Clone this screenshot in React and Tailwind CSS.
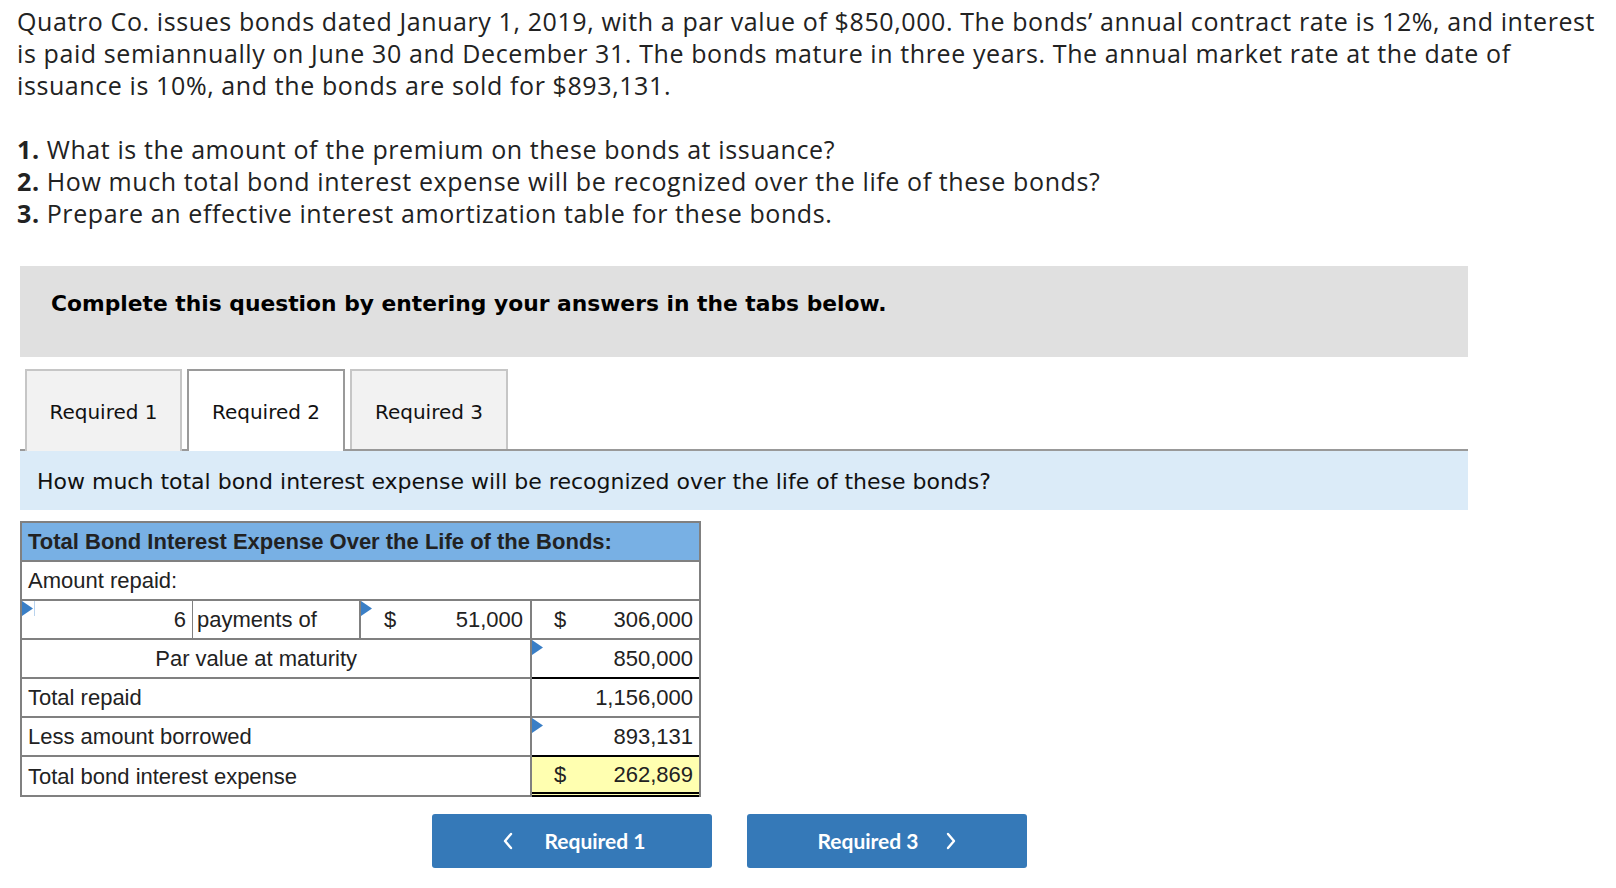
import React from "react";

const Tri = () => (
  <svg className="absolute left-0 top-0" width="11" height="15" viewBox="0 0 11 15">
    <polygon points="0,0 11,7.5 0,15" fill="#3a7fc6" />
  </svg>
);

export default function App() {
  const arial = { fontFamily: '"Liberation Sans", Arial, sans-serif' };
  return (
    <div className="w-[1616px] h-[888px] bg-white overflow-hidden text-[#1a1a1a]">
      <div
        className="pl-[17px] pt-[5px] text-[25px] leading-[32px] tracking-[0.6px] text-[#222]"
        style={{ fontFamily: '"Open Sans", Lato, sans-serif' }}
      >
        <div className="whitespace-nowrap">
          Quatro Co. issues bonds dated January 1, 2019, with a par value of $850,000. The bonds’ annual contract rate is 12%, and interest
        </div>
        <div className="whitespace-nowrap">
          is paid semiannually on June 30 and December 31. The bonds mature in three years. The annual market rate at the date of
        </div>
        <div className="whitespace-nowrap">issuance is 10%, and the bonds are sold for $893,131.</div>
        <div className="h-[32px]" />
        <div className="whitespace-nowrap">
          <b>1.</b> What is the amount of the premium on these bonds at issuance?
        </div>
        <div className="whitespace-nowrap">
          <b>2.</b> How much total bond interest expense will be recognized over the life of these bonds?
        </div>
        <div className="whitespace-nowrap">
          <b>3.</b> Prepare an effective interest amortization table for these bonds.
        </div>
      </div>

      <div className="ml-[20px] w-[1448px] mt-[37px]" style={{ fontFamily: '"DejaVu Sans", Verdana, sans-serif' }}>
        <div className="h-[91px] bg-[#e0e0e0] pl-[31px] pt-[25px]">
          <div className="text-[21.8px] leading-[26px] font-bold text-black whitespace-nowrap">
            Complete this question by entering your answers in the tabs below.
          </div>
        </div>

        <div className="mt-[12px] flex pl-[5px] gap-[5px] border-b-2 border-[#999] h-[82px]">
          <div className="w-[157px] h-[82px] bg-[#f2f2f2] border-2 border-b-0 border-[#c6c6c6] flex items-center justify-center pt-[2px] text-[20px] text-[#111]">
            Required 1
          </div>
          <div className="w-[158px] h-[82px] bg-white border-2 border-b-0 border-[#9a9a9a] flex items-center justify-center pt-[2px] text-[20px] text-[#111] relative z-10">
            Required 2
          </div>
          <div className="w-[158px] h-[80px] bg-[#f2f2f2] border-2 border-b-0 border-[#c6c6c6] flex items-center justify-center pt-[4px] text-[20px] text-[#111]">
            Required 3
          </div>
        </div>

        <div className="h-[59px] bg-[#dbebf8] pl-[17px] pt-[2px] flex items-center text-[22px] text-[#111] whitespace-nowrap">
          How much total bond interest expense will be recognized over the life of these bonds?
        </div>
      </div>

      <div
        className="ml-[20px] mt-[11px] w-[681px] border-2 border-b-0 border-[#808080] text-[22px] text-[#222]"
        style={arial}
      >
        <div className="h-[39px] bg-[#78b0e4] border-b-2 border-[#808080] flex items-center pl-[6px] font-bold whitespace-nowrap">
          Total Bond Interest Expense Over the Life of the Bonds:
        </div>
        <div className="h-[39px] border-b-2 border-[#808080] flex items-center pl-[6px]">Amount repaid:</div>

        <div className="h-[39px] flex">
          <div className="relative w-[171px] border-b-2 border-r border-[#808080] flex items-center justify-end pr-[6px]">
            <Tri />
            <div className="absolute left-[12px] top-0 h-[15px] w-px bg-[#b9d3ee]" />
            6
          </div>
          <div className="w-[168px] border-b-2 border-r-2 border-[#808080] flex items-center pl-[4px]">payments of</div>
          <div className="relative w-[171px] border-b-2 border-r-2 border-[#808080] flex items-center pl-[23px] pr-[7px] justify-between">
            <Tri />
            <span>$</span>
            <span>51,000</span>
          </div>
          <div className="flex-1 border-b-2 border-[#808080] flex items-center pl-[22px] pr-[6px] justify-between">
            <span>$</span>
            <span>306,000</span>
          </div>
        </div>

        <div className="h-[39px] flex">
          <div className="w-[510px] border-b-2 border-r-2 border-[#808080] flex items-center">
            <div className="w-[335px] text-right whitespace-nowrap">Par value at maturity</div>
          </div>
          <div className="relative flex-1 border-b-2 border-black flex items-center justify-end pr-[6px]">
            <Tri />
            850,000
          </div>
        </div>

        <div className="h-[39px] flex">
          <div className="w-[510px] border-b-2 border-r-2 border-[#808080] flex items-center pl-[6px]">Total repaid</div>
          <div className="flex-1 border-b-2 border-[#808080] flex items-center justify-end pr-[6px]">1,156,000</div>
        </div>

        <div className="h-[39px] flex">
          <div className="w-[510px] border-b-2 border-r-2 border-[#808080] flex items-center pl-[6px]">Less amount borrowed</div>
          <div className="relative flex-1 border-b-2 border-black flex items-center justify-end pr-[6px]">
            <Tri />
            893,131
          </div>
        </div>

        <div className="h-[40px] flex">
          <div className="w-[510px] border-b-2 border-r-2 border-[#808080] flex items-center pl-[6px]">Total bond interest expense</div>
          <div className="flex-1 bg-[#ffffb0] border-b-[5px] border-double border-black flex items-center pl-[22px] pr-[6px] justify-between">
            <span>$</span>
            <span>262,869</span>
          </div>
        </div>
      </div>

      <div className="mt-[17px] ml-[432px] flex gap-[35px]" style={{ fontFamily: 'Lato, "Open Sans", sans-serif' }}>
        <button className="w-[280px] h-[54px] bg-[#3579b8] rounded-[3px] text-white font-bold text-[21px] flex items-center justify-center gap-[30px] pl-[4px]">
          <svg width="12" height="18" viewBox="0 0 12 18" fill="none" stroke="white" strokeWidth="2.4" strokeLinecap="round" strokeLinejoin="round">
            <polyline points="9,2 3,9 9,16" />
          </svg>
          <span>Required 1</span>
        </button>
        <button className="w-[280px] h-[54px] bg-[#3579b8] rounded-[3px] text-white font-bold text-[21px] flex items-center justify-center gap-[26px]">
          <span>Required 3</span>
          <svg width="12" height="18" viewBox="0 0 12 18" fill="none" stroke="white" strokeWidth="2.4" strokeLinecap="round" strokeLinejoin="round">
            <polyline points="3,2 9,9 3,16" />
          </svg>
        </button>
      </div>
    </div>
  );
}
